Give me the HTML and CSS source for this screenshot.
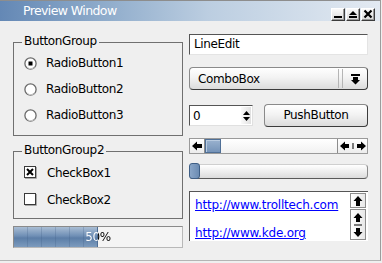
FILE: index.html
```html
<!DOCTYPE html>
<html>
<head>
<meta charset="utf-8">
<link rel="stylesheet" href="styles.css">
</head>
<body>
<div class="window">
  <div class="titlebar">
    <span class="title">Preview Window</span>
    <div class="tbtns">
      <span class="tbtn"><svg width="12" height="11" viewBox="0 0 12 11"><rect x="2" y="7" width="8" height="2" fill="#000"/></svg></span>
      <span class="tbtn"><svg width="12" height="11" viewBox="0 0 12 11"><polygon points="2,6 6,2 10,6" fill="#000"/><rect x="2" y="7" width="8" height="2" fill="#000"/></svg></span>
      <span class="tbtn"><svg width="12" height="11" viewBox="0 0 12 11"><path d="M2.5 1.5 L9.5 8.5 M9.5 1.5 L2.5 8.5" stroke="#000" stroke-width="2.2"/></svg></span>
    </div>
  </div>
  <div class="content">
    <div class="col left">
      <div class="group g1">
        <span class="gtitle">ButtonGroup</span>
        <div class="opts">
          <div class="opt"><svg class="radio" width="13" height="13" viewBox="0 0 13 13"><circle cx="6.5" cy="6.5" r="5.6" fill="#fff" stroke="#6a6a6a" stroke-width="1.3"/><path d="M3 10 A5 5 0 0 0 11 9.5" fill="none" stroke="#cfcfcf" stroke-width="1"/><rect x="4.5" y="4.5" width="4" height="4" fill="#000"/></svg><span>RadioButton1</span></div>
          <div class="opt"><svg class="radio" width="13" height="13" viewBox="0 0 13 13"><circle cx="6.5" cy="6.5" r="5.6" fill="#fff" stroke="#6a6a6a" stroke-width="1.3"/><path d="M3 10 A5 5 0 0 0 11 9.5" fill="none" stroke="#cfcfcf" stroke-width="1"/></svg><span>RadioButton2</span></div>
          <div class="opt"><svg class="radio" width="13" height="13" viewBox="0 0 13 13"><circle cx="6.5" cy="6.5" r="5.6" fill="#fff" stroke="#6a6a6a" stroke-width="1.3"/><path d="M3 10 A5 5 0 0 0 11 9.5" fill="none" stroke="#cfcfcf" stroke-width="1"/></svg><span>RadioButton3</span></div>
        </div>
      </div>
      <div class="group g2">
        <span class="gtitle">ButtonGroup2</span>
        <div class="opts">
          <div class="opt chk"><svg class="check" width="13" height="13" viewBox="0 0 13 13"><rect x="0.5" y="0.5" width="11" height="11" fill="#fff" stroke="#3a3a3a"/><path d="M12.5 1 V12.5 H1" fill="none" stroke="#a8a8a8"/><path d="M3 3 L9 9 M9 3 L3 9" stroke="#000" stroke-width="2"/></svg><span>CheckBox1</span></div>
          <div class="opt chk"><svg class="check" width="13" height="13" viewBox="0 0 13 13"><rect x="0.5" y="0.5" width="11" height="11" fill="#fff" stroke="#3a3a3a"/><path d="M12.5 1 V12.5 H1" fill="none" stroke="#a8a8a8"/></svg><span>CheckBox2</span></div>
        </div>
      </div>
      <div class="progress">
        <div class="pfill" style="width: 50%"></div>
        <span class="plabel">50%</span>
      </div>
    </div>
    <div class="col right">
      <div class="lineedit">LineEdit</div>
      <div class="combo">
        <span class="ctext">ComboBox</span>
        <span class="cgroove"></span>
        <svg class="carrow" width="11" height="12" viewBox="0 0 11 12"><rect x="1" y="1" width="9" height="2" fill="#000"/><polygon points="3,4 8,4 8,7 10,7 5.5,11.5 1,7 3,7" fill="#000"/></svg>
      </div>
      <div class="row">
        <div class="spin">
          <span class="stext">0</span>
          <span class="sbtn"><svg width="9" height="14" viewBox="0 0 9 14"><polygon points="1,6 4.5,2 8,6" fill="#000"/><polygon points="1,8 4.5,12 8,8" fill="#000"/></svg></span>
        </div>
        <div class="pushbutton">PushButton</div>
      </div>
      <div class="hscroll">
        <span class="sarrow"><svg width="12" height="10" viewBox="0 0 12 10"><polygon points="1,5 6,0.5 6,3 11,3 11,7 6,7 6,9.5" fill="#000"/></svg></span>
        <span class="shandle"></span>
        <span class="strack"></span>
        <span class="sarrow2"><svg width="28" height="10" viewBox="0 0 28 10"><polygon points="1,5 6,0.5 6,3 10,3 10,7 6,7 6,9.5" fill="#000"/><rect x="13.5" y="2" width="1" height="6" fill="#000"/><polygon points="27,5 22,0.5 22,3 18,3 18,7 22,7 22,9.5" fill="#000"/></svg></span>
      </div>
      <div class="slider">
        <span class="sgroove"></span>
        <span class="slhandle"></span>
      </div>
      <div class="textbox">
        <div class="links">
          <a class="link first">http://www.trolltech.com</a>
          <a class="link">http://www.kde.org</a>
        </div>
        <div class="vscroll">
          <span class="vbtn"><svg width="10" height="12" viewBox="0 0 10 12"><polygon points="5,1 9.5,6 7,6 7,11 3,11 3,6 0.5,6" fill="#000"/></svg></span>
          <span class="vbtn2"><svg width="10" height="26" viewBox="0 0 10 26"><polygon points="5,1 9.5,6 7,6 7,10 3,10 3,6 0.5,6" fill="#000"/><rect x="1" y="12.5" width="8" height="1" fill="#000"/><polygon points="5,25 9.5,20 7,20 7,16 3,16 3,20 0.5,20" fill="#000"/></svg></span>
        </div>
      </div>
    </div>
  </div>
</div>
</body>
</html>
```
FILE: styles.css
```css
html, body {
  margin: 0;
  padding: 0;
}
body {
  width: 382px;
  height: 263px;
  overflow: hidden;
  background: #efefef;
  font-family: "DejaVu Sans", Verdana, sans-serif;
  font-size: 12px;
  letter-spacing: -0.35px;
  color: #000;
}
.window {
  box-sizing: border-box;
  width: 381px;
  height: 261px;
  border-right: 1px solid #9c9c9c;
  border-bottom: 1px solid #b4b4b4;
  background: #efefef;
  display: flex;
  flex-direction: column;
}
.titlebar {
  box-sizing: border-box;
  height: 21px;
  border-top: 1px solid #8d8d8d;
  background: linear-gradient(to right, #6488b5 0%, #93afcd 30%, #bccee1 55%, #e3eaf2 100%);
  display: flex;
  align-items: center;
  padding-left: 23px;
  padding-right: 5px;
}
.title {
  color: #fff;
  font-size: 12.5px;
  letter-spacing: -0.6px;
  flex: 1;
  margin-top: -1px;
}
.tbtns {
  display: flex;
  gap: 1px;
  margin-top: 6px;
}
.tbtn {
  box-sizing: border-box;
  width: 14px;
  height: 13px;
  background: linear-gradient(#fafafa, #dadada);
  border: 1px solid;
  border-color: #ffffff #3c3c3c #3c3c3c #ffffff;
  box-shadow: inset -1px -1px 0 #9a9a9a;
  display: flex;
  align-items: center;
  justify-content: center;
}
.tbtn svg { display: block; }
.content {
  flex: 1;
  display: flex;
  gap: 6px;
  padding-left: 13px;
}
.col {
  display: flex;
  flex-direction: column;
}
.left { width: 170px; }
.right { width: 179px; }

/* group boxes */
.group {
  box-sizing: border-box;
  border: 1px solid #707070;
  display: flex;
  flex-direction: column;
  align-items: flex-start;
}
.g1 { margin-top: 21px; height: 94px; }
.g2 { margin-top: 15px; height: 68px; }
.gtitle {
  margin: -9px 0 0 8px;
  padding: 0 2px;
  height: 14px;
  line-height: 14px;
  background: #efefef;
}
.opts {
  display: flex;
  flex-direction: column;
  padding-left: 10px;
  padding-top: 2px;
}
.opt {
  height: 26px;
  display: flex;
  align-items: center;
  gap: 9px;
}
.chk { height: 27px; gap: 10px; }
.radio, .check { display: block; flex: none; }

/* progress */
.progress {
  margin-top: 7px;
  box-sizing: border-box;
  height: 22px;
  border: 1px solid #b8b8b8;
  border-top-color: #8a8a8a;
  border-left-color: #8a8a8a;
  background: #f4f4f4;
  display: grid;
}
.progress > * { grid-area: 1 / 1; }
.pfill {
  box-sizing: border-box;
  background:
    repeating-linear-gradient(to right, transparent 0 13px, rgba(60,90,130,0.25) 13px 14px),
    linear-gradient(#a9bdd4, #6f8fb5 45%, #5c7ea7 55%, #7c9bbe);
  border-right: 1px solid #4d6d94;
}
.plabel {
  width: 168px;
  text-align: center;
  line-height: 20px;
  font-size: 12px;
  background: linear-gradient(to right, #ffffff 0 84px, #000000 84px 168px);
  -webkit-background-clip: text;
  background-clip: text;
  color: transparent;
}

/* right column */
.lineedit {
  margin-top: 13px;
  box-sizing: border-box;
  height: 21px;
  background: #fff;
  border: 1px solid #e4e4e4;
  border-top-color: #555;
  border-left-color: #555;
  padding-left: 4px;
  line-height: 19px;
}
.combo {
  margin-top: 12px;
  box-sizing: border-box;
  height: 23px;
  border: 1px solid #8a8a8a;
  border-right-color: #3c3c3c;
  border-bottom-color: #3c3c3c;
  border-radius: 4px;
  background: linear-gradient(#ffffff, #f3f3f3 45%, #dcdcdc);
  display: flex;
  align-items: center;
  padding-left: 8px;
  padding-right: 6px;
}
.ctext { flex: 1; }
.cgroove {
  width: 3px;
  height: 19px;
  border-left: 1px solid #b5b5b5;
  border-right: 1px solid #b5b5b5;
  margin-right: 7px;
}
.carrow { display: block; }
.row {
  margin-top: 14px;
  height: 23px;
  display: flex;
  align-items: center;
  gap: 11px;
}
.spin {
  box-sizing: border-box;
  width: 64px;
  height: 21px;
  background: #fff;
  border: 1px solid #e0e0e0;
  border-top-color: #555;
  border-left-color: #555;
  display: flex;
  align-items: center;
  padding-left: 3px;
  padding-right: 1px;
}
.stext { flex: 1; }
.sbtn {
  width: 10px;
  height: 17px;
  background: linear-gradient(to right, #fafafa, #e0e0e0);
  display: flex;
  align-items: center;
  justify-content: center;
}
.sbtn svg { display: block; }
.pushbutton {
  box-sizing: border-box;
  flex: 1;
  height: 23px;
  border: 1px solid #8a8a8a;
  border-right-color: #3c3c3c;
  border-bottom-color: #3c3c3c;
  border-radius: 4px;
  background: linear-gradient(#ffffff, #f3f3f3 45%, #dcdcdc);
  text-align: center;
  line-height: 21px;
}
.hscroll {
  margin-top: 11px;
  box-sizing: border-box;
  height: 16px;
  border: 1px solid #9a9a9a;
  background: linear-gradient(#ffffff, #f1f1f1);
  display: flex;
}
.sarrow, .sarrow2 {
  box-sizing: border-box;
  height: 14px;
  background: linear-gradient(#ffffff, #ececec);
  border: 1px solid #8c8c8c;
  border-top: none;
  border-bottom: none;
  display: flex;
  align-items: center;
  justify-content: center;
}
.sarrow { width: 15px; border-left: none; }
.sarrow2 { width: 30px; border-right: none; }
.sarrow svg, .sarrow2 svg { display: block; }
.shandle {
  box-sizing: border-box;
  width: 16px;
  height: 14px;
  border: 1px solid #4f6f96;
  background: linear-gradient(#9ab2cf, #7593b8);
  box-shadow: inset 1px 1px 0 #b9cbe0;
}
.strack { flex: 1; }
.slider {
  margin-top: 9px;
  height: 16px;
  display: grid;
}
.slider > * { grid-area: 1 / 1; }
.sgroove {
  box-sizing: border-box;
  margin-top: 1px;
  height: 15px;
  border-radius: 4px;
  background: linear-gradient(#ffffff, #eeeeee 50%, #dcdcdc);
  border: 1px solid #cfcfcf;
  border-bottom-color: #5a5a5a;
  border-right-color: #8a8a8a;
}
.slhandle {
  box-sizing: border-box;
  width: 11px;
  height: 16px;
  border: 1px solid #3f5f86;
  border-radius: 3px;
  background: linear-gradient(to right, #8aa6c8, #6c8cb3);
}
.textbox {
  margin-top: 12px;
  box-sizing: border-box;
  height: 50px;
  background: #fff;
  border-top: 1px solid #555;
  border-left: 1px solid #555;
  display: flex;
}
.links {
  flex: 1;
  display: flex;
  flex-direction: column;
  padding-left: 5px;
  letter-spacing: -0.2px;
}
.link {
  color: #0000ff;
  text-decoration: underline;
  line-height: 14px;
}
.link.first { margin-top: 6px; margin-bottom: 14px; }
.vscroll {
  width: 16px;
  display: flex;
  flex-direction: column;
  gap: 1px;
  margin-right: 2px;
  padding-top: 1px;
}
.vbtn, .vbtn2 {
  box-sizing: border-box;
  width: 16px;
  border: 1px solid #8c8c8c;
  background: linear-gradient(to right, #ffffff, #e8e8e8);
  display: flex;
  align-items: center;
  justify-content: center;
}
.vbtn { height: 15px; }
.vbtn2 { height: 31px; }
.vbtn svg, .vbtn2 svg { display: block; }
```
